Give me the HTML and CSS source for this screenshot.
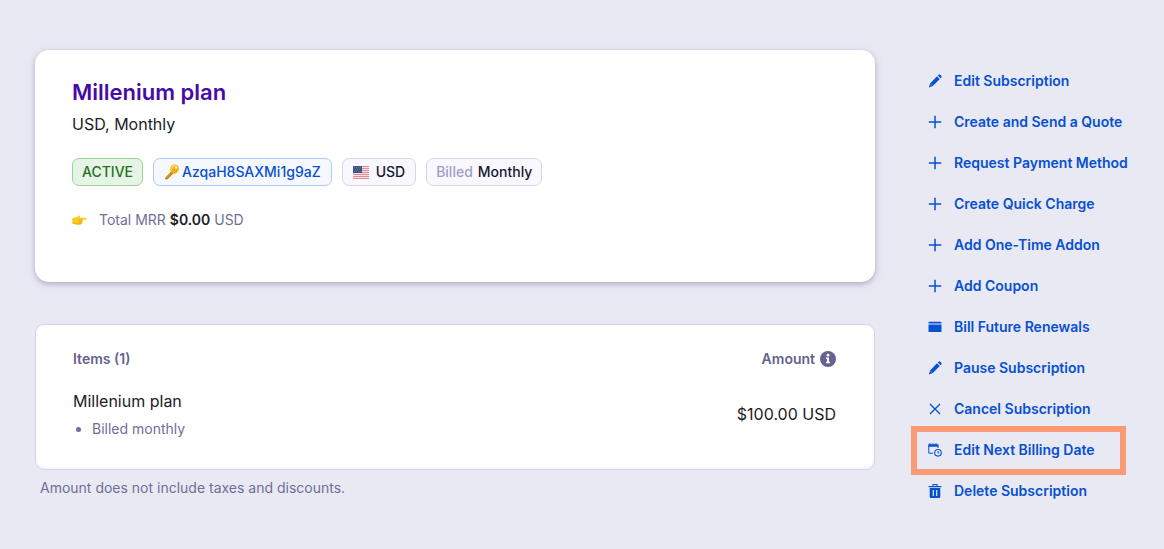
FILE: index.html
```html
<!DOCTYPE html>
<html lang="en">
<head>
  <meta charset="UTF-8">
  <meta name="viewport" content="width=device-width, initial-scale=1.0">
  <title>Millenium plan</title>
  <link rel="stylesheet" href="styles.css">
</head>
<body>

  <!-- shared icons -->
  <svg class="sprite" aria-hidden="true">
    <symbol id="icon-pencil" viewBox="0 0 14 14">
      <path d="M9 2.3l2.8 2.8-7 7-4 1.3 1.3-4z"/>
      <path d="M9.8 1.5l.8-.8q.8-.7 1.6 0l1.1 1.1q.7.8 0 1.6l-.8.8z"/>
      <path d="M2.7 10.2l1.2 1.2" stroke="#e9e9f4" stroke-width=".6"/>
    </symbol>
    <symbol id="icon-plus" viewBox="0 0 14 14">
      <path d="M7 .8v12.4M.8 7h12.4" fill="none" stroke="currentColor" stroke-width="1.5"/>
    </symbol>
  </svg>

  <div class="page">
    <main class="content">

      <section class="card summary">
        <h1>Millenium plan</h1>
        <p class="subtitle">USD, Monthly</p>

        <div class="badges">
          <span class="badge badge-active">ACTIVE</span>
          <a href="#" class="badge badge-key">
            <svg class="key" viewBox="0 0 16 16" aria-hidden="true">
              <path d="M8.2 6.5l2 2-5.6 5.8q-1.2 1.3-2.4 1.1-1.4-.2-1.2-1.4z" fill="#b87c0b"/>
              <path d="M7.9 6.7l1.4 1.2-6.2 6.5-1.4-.7z" fill="#d99a15"/>
              <path d="M7.4 1.8q2-1.7 4.7-1.1 2.6.7 2.9 3.1.2 2.7-1.7 4.6-2.3 2-4.5.9-2.2-1.1-2.6-3.3-.2-2.5 1.2-4.2z" fill="#efae18"/>
              <path d="M8.1 2.1q2.7-1.9 5-.1Q10.6 2 8.9 3.7 7.3 5.4 7.4 7q-1.7-2.6.7-4.9z" fill="#ffd04c"/>
              <circle cx="12.2" cy="3.5" r="1.2" fill="#f7f9fe"/>
            </svg>
            AzqaH8SAXMi1g9aZ
          </a>
          <span class="badge badge-currency">
            <svg class="flag" viewBox="0 0 16 13" aria-hidden="true">
              <rect width="16" height="13" rx="1" fill="#f3dfe4"/>
              <path d="M0 .5h16M0 2.5h16M0 4.5h16M0 6.5h16M0 8.5h16M0 10.5h16M0 12.5h16" stroke="#e18e98"/>
              <path d="M1 0h8v7H0V1q0-1 1-1z" fill="#3c5684"/>
              <path d="M1 1.5h7M2 3.5h6M1 5.5h7" stroke="#8291b1" stroke-width=".6" stroke-dasharray=".7 1.3"/>
            </svg>
            USD
          </span>
          <span class="badge"><span class="faded">Billed</span> Monthly</span>
        </div>

        <p class="mrr">
          <svg class="hand" viewBox="0 0 16 12" aria-hidden="true">
            <path d="M1.8 3.6Q4 3.7 6.2 2.2 7.7.8 8.6 1.3q.8.8-.7 2.2h6.5q1.4.1 1.4 1.1t-1.4 1.1h-4l1 .9q.4.8-.4 1.4.5 1-.5 1.5.2 1-1.1 1.2-3.8.7-5.8-.3L.4 9.8V4z" fill="#ffc91f"/>
            <path d="M7.6 5.8h2.9q.6 1-.2 1.5H7.7M7.5 7.5h2.7q.4 1-.4 1.4H7.3M7 9h2.4q.2.9-.8 1.1H6.3" fill="none" stroke="#ee971d" stroke-width=".5"/>
            <path d="M.5 9.2q3 1.3 5.7.8" fill="none" stroke="#fa9e17" stroke-width=".8"/>
          </svg>
          <span>Total MRR <strong>$0.00</strong> USD</span>
        </p>
      </section>

      <section class="card items">
        <table>
          <thead>
            <tr>
              <th>Items (1)</th>
              <th class="amount">
                <span class="amount-label">Amount
                  <svg class="info" viewBox="0 0 16 16" aria-hidden="true">
                    <circle cx="8" cy="8" r="8" fill="currentColor"/>
                    <circle cx="8" cy="4.2" r="1.4" fill="#fff"/>
                    <path d="M6 6.6h3v4.2h1v1.5H6v-1.5h1V8.1H6z" fill="#fff"/>
                  </svg>
                </span>
              </th>
            </tr>
          </thead>
          <tbody>
            <tr>
              <td>
                <div>Millenium plan</div>
                <ul class="details">
                  <li>Billed monthly</li>
                </ul>
              </td>
              <td class="amount">$100.00 USD</td>
            </tr>
          </tbody>
        </table>
      </section>
      <p class="note">Amount does not include taxes and discounts.</p>

    </main>

    <nav class="actions" aria-label="Subscription actions">
      <ul>
        <li><a href="#"><svg><use href="#icon-pencil"/></svg>Edit Subscription</a></li>
        <li><a href="#"><svg><use href="#icon-plus"/></svg>Create and Send a Quote</a></li>
        <li><a href="#"><svg><use href="#icon-plus"/></svg>Request Payment Method</a></li>
        <li><a href="#"><svg><use href="#icon-plus"/></svg>Create Quick Charge</a></li>
        <li><a href="#"><svg><use href="#icon-plus"/></svg>Add One-Time Addon</a></li>
        <li><a href="#"><svg><use href="#icon-plus"/></svg>Add Coupon</a></li>
        <li><a href="#">
          <svg viewBox="0 0 14 14"><path d="M1.4 1.8h11.2q.9 0 .9.8v.8H.5v-.8q0-.8.9-.8zM.5 4.6h13v6.6q0 .9-.9.9H1.4q-.9 0-.9-.9z"/></svg>Bill Future Renewals</a></li>
        <li><a href="#"><svg><use href="#icon-pencil"/></svg>Pause Subscription</a></li>
        <li><a href="#">
          <svg viewBox="0 0 14 14"><path d="M2 2l10 10M12 2L2 12" fill="none" stroke="currentColor" stroke-width="1.4"/></svg>Cancel Subscription</a></li>
        <li class="highlight"><a href="#">
          <svg viewBox="0 0 14 14">
            <path d="M.3 1.3h1.1V.2h1.2v1.1h1.8V.2h1.2v1.1h1.8V.2h1.2v1.1h1.9v2.5H.3z"/>
            <path d="M.8 3v7.2h4.4M10 3v2" fill="none" stroke="currentColor"/>
            <circle cx="10" cy="9.8" r="3.3" fill="none" stroke="currentColor" stroke-width="1.1"/>
            <path d="M10 8v2h1.4" fill="none" stroke="currentColor" stroke-width=".9"/>
          </svg>Edit Next Billing Date</a></li>
        <li><a href="#">
          <svg viewBox="0 0 14 14">
            <path d="M4.4 2V.7q0-.6.6-.6h4q.6 0 .6.6V2h3.8v1.3H.6V2zM5.5 2h3v-.9h-3z" fill-rule="evenodd"/>
            <path d="M1.7 4.1h10.6v8.6q0 1.2-1.2 1.2H2.9q-1.2 0-1.2-1.2zM4.7 6v6h1.2V6zM8.1 6v6h1.2V6z" fill-rule="evenodd"/>
          </svg>Delete Subscription</a></li>
      </ul>
    </nav>
  </div>

</body>
</html>
```
FILE: styles.css
```css
* {
  box-sizing: border-box;
}

body {
  margin: 0;
  background-color: #e9e9f4;
  color: #212124;
  font-family: Inter, "Liberation Sans", sans-serif;
  font-size: 16px;
  line-height: 24px;
}

h1, p, ul {
  margin: 0;
}

a {
  color: #0750d0;
  text-decoration: none;
}

svg {
  flex: none;
}

.sprite {
  display: none;
}

.page {
  display: grid;
  grid-template-columns: minmax(0, 1fr) 203px;
  column-gap: 53px;
  padding: 50px 33px 40px 35px;
}

.card {
  background-color: #fff;
}

/* plan summary */
.summary {
  padding: 28px 37px 50px;
  border-radius: 14px;
  box-shadow: 0 2px 4px rgba(50, 50, 80, 0.25), 0 2px 12px rgba(50, 50, 80, 0.1);
}

h1 {
  color: #480ba5;
  font-size: 22px;
  font-weight: 600;
  line-height: 28px;
}

.subtitle {
  margin-top: 6px;
}

.badges {
  display: flex;
  flex-wrap: wrap;
  gap: 10px;
  margin-top: 22px;
}

.badge {
  display: flex;
  align-items: center;
  gap: 5px;
  height: 28px;
  padding: 0 9px;
  border: 1px solid #d9d7ed;
  border-radius: 7px;
  background-color: #f8f8fe;
  color: #17172f;
  font-size: 14px;
  font-weight: 500;
}

.badge-active {
  border-color: #98d58e;
  background-color: #e6f4e5;
  color: #28701f;
}

.badge-key {
  gap: 2px;
  padding: 0 10px;
  border-color: #a9cafa;
  background-color: #f6f8fd;
  color: #0750d0;
}

.badge-currency {
  gap: 7px;
  padding: 0 10px;
}

.faded {
  color: #a29fc3;
}

.key {
  width: 16px;
  height: 16px;
}

.flag {
  width: 16px;
  height: 13px;
}

.mrr {
  display: flex;
  align-items: center;
  gap: 12px;
  margin-top: 22px;
  color: #716e97;
  font-size: 14px;
}

.mrr strong {
  color: #212124;
  font-weight: 600;
}

.hand {
  width: 15px;
  height: 12px;
}

/* items */
.items {
  margin-top: 42px;
  padding: 24px 38px 30px 37px;
  border: 1px solid #d5d2ef;
  border-radius: 9px;
  box-shadow: inset 0 -2px 3px #f3f3fb;
}

table {
  width: 100%;
  border-collapse: collapse;
}

th, td {
  padding: 0;
  text-align: left;
}

th {
  padding-bottom: 20px;
  color: #65628f;
  font-size: 14px;
  font-weight: 600;
  line-height: 20px;
}

.amount {
  text-align: right;
}

.amount-label {
  display: flex;
  justify-content: flex-end;
  align-items: center;
  gap: 5px;
}

.info {
  width: 16px;
  height: 16px;
}

.details {
  margin-top: 6px;
  padding-left: 19px;
  color: #716e97;
  font-size: 14px;
  line-height: 20px;
}

.note {
  margin-top: 6px;
  padding-left: 5px;
  color: #716e97;
  font-size: 14px;
}

/* actions */
.actions {
  padding-top: 10px;
}

.actions ul {
  padding: 0;
  list-style: none;
}

.actions li {
  position: relative;
}

.actions a {
  display: flex;
  align-items: center;
  gap: 12px;
  height: 41px;
  font-size: 14px;
  font-weight: 600;
  white-space: nowrap;
}

.actions svg {
  width: 14px;
  height: 14px;
  fill: currentColor;
}

.highlight::after {
  content: "";
  position: absolute;
  inset: -3px 5px -5px -17px;
  border: 6px solid #fa9a76;
  pointer-events: none;
}
```
